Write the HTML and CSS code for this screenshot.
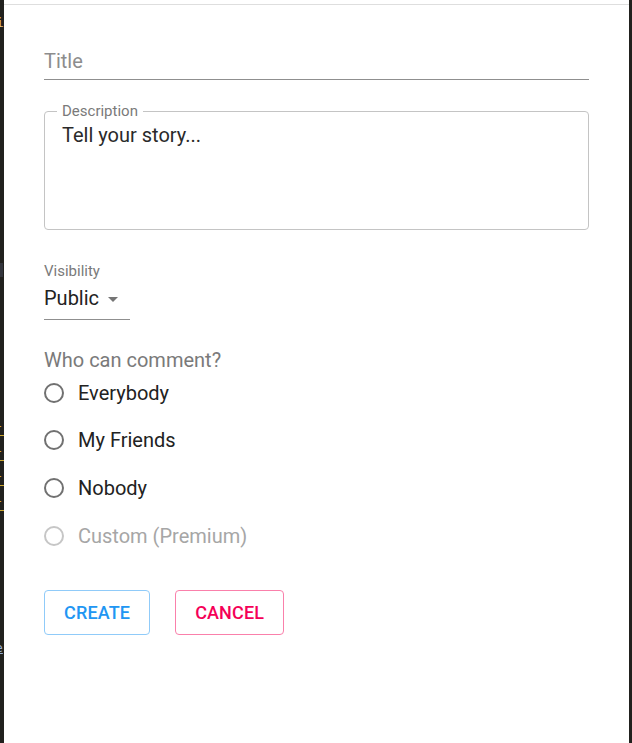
FILE: index.html
```html
<!DOCTYPE html>
<html>
<head>
<meta charset="utf-8">
<link rel="stylesheet" href="styles.css">
</head>
<body>
<div class="strip">
  <div class="s-i">i</div>
  <div class="s-blip"></div>
  <div class="s-ones">
    <div class="s-one">1</div>
    <div class="s-one">1</div>
    <div class="s-one">1</div>
    <div class="s-one">1</div>
  </div>
  <div class="s-e">e</div>
</div>
<div class="panel">
  <div class="topline"></div>
  <div class="form">
    <div class="title-field">Title</div>
    <div class="desc">
      <span class="desc-label">Description</span>
      <div class="desc-text">Tell your story...</div>
    </div>
    <div class="vis-label">Visibility</div>
    <div class="select">
      <span>Public</span>
      <svg class="arrow" width="24" height="24" viewBox="0 0 24 24"><path d="M7 10l5 5 5-5z" fill="#757575"/></svg>
    </div>
    <div class="legend">Who can comment?</div>
    <div class="radios">
      <div class="radio"><span class="circle"></span><span>Everybody</span></div>
      <div class="radio"><span class="circle"></span><span>My Friends</span></div>
      <div class="radio"><span class="circle"></span><span>Nobody</span></div>
      <div class="radio disabled"><span class="circle"></span><span>Custom (Premium)</span></div>
    </div>
    <div class="buttons">
      <button class="btn create">CREATE</button>
      <button class="btn cancel">CANCEL</button>
    </div>
  </div>
</div>
<div class="strip-right"></div>
</body>
</html>
```
FILE: styles.css
```css
html, body {
  margin: 0;
  padding: 0;
}
body {
  display: flex;
  width: 632px;
  height: 743px;
  overflow: hidden;
  background: #21211e;
  font-family: Roboto, "Liberation Sans", sans-serif;
}
.strip {
  width: 4px;
  flex: none;
  overflow: hidden;
  background: #21211e;
  font-family: "DejaVu Sans Mono", monospace;
  font-size: 13px;
}
.s-i {
  margin-top: 16px;
  margin-left: -4px;
  color: #e5c07b;
  line-height: 14px;
}
.s-blip {
  margin-top: 233px;
  height: 14px;
  width: 3px;
  background: #33353c;
}
.s-ones {
  margin-top: 134px;
}
.s-one {
  margin-left: -6px;
  color: #d8b233;
  line-height: 24px;
  height: 24px;
  border-bottom: 1px solid #c9a52e;
}
.s-e {
  margin-top: 130px;
  margin-left: -5px;
  color: #9ab0d0;
  line-height: 14px;
  text-decoration: underline;
}
.strip-right {
  width: 3px;
  flex: none;
  background: #21211e;
}
.panel {
  flex: 1;
  background: #fff;
}
.topline {
  margin-top: 4px;
  height: 1px;
  background: #dedede;
}
.form {
  padding: 0 40px;
  display: flex;
  flex-direction: column;
  align-items: flex-start;
}
.title-field {
  align-self: stretch;
  margin-top: 44px;
  font-size: 20px;
  line-height: 24px;
  color: #8d8d8d;
  padding-bottom: 6px;
  border-bottom: 1px solid #8f8f8f;
}
.desc {
  position: relative;
  align-self: stretch;
  box-sizing: border-box;
  margin-top: 31px;
  height: 119px;
  border: 1px solid #c4c4c4;
  border-radius: 4px;
  padding: 11px 17px;
}
.desc-label {
  position: absolute;
  top: -10px;
  left: 12px;
  padding: 0 5px;
  background: #fff;
  font-size: 15px;
  line-height: 18px;
  color: #7a7a7a;
}
.desc-text {
  font-size: 20px;
  line-height: 24px;
  color: #2a2a2a;
}
.vis-label {
  margin-top: 32px;
  font-size: 15px;
  line-height: 18px;
  color: #7a7a7a;
}
.select {
  margin-top: 5px;
  width: 86px;
  display: flex;
  align-items: center;
  font-size: 20px;
  line-height: 24px;
  color: #222;
  padding-bottom: 8px;
  border-bottom: 1px solid #8f8f8f;
}
.arrow {
  margin-left: 2px;
  margin-top: 2px;
}
.legend {
  margin-top: 28px;
  font-size: 20px;
  line-height: 24px;
  color: #7a7a7a;
}
.radios {
  margin-top: -3px;
  display: flex;
  flex-direction: column;
}
.radio {
  height: 47.67px;
  display: flex;
  align-items: center;
  gap: 14px;
  font-size: 20px;
  line-height: 24px;
  color: #222;
}
.circle {
  box-sizing: border-box;
  width: 20px;
  height: 20px;
  border: 2px solid #717171;
  border-radius: 50%;
}
.radio.disabled {
  color: #a6a6a6;
}
.radio.disabled .circle {
  border-color: #c6c6c6;
}
.buttons {
  margin-top: 30px;
  display: flex;
  gap: 25px;
}
.btn {
  height: 45px;
  padding: 0 19px;
  background: #fff;
  border-radius: 4px;
  font-family: Roboto, "Liberation Sans", sans-serif;
  font-size: 18px;
  font-weight: 500;
  letter-spacing: 0.15px;
}
.create {
  color: #2196f3;
  border: 1px solid #90cbf9;
}
.cancel {
  color: #f50057;
  border: 1px solid #fa80ab;
}
```
